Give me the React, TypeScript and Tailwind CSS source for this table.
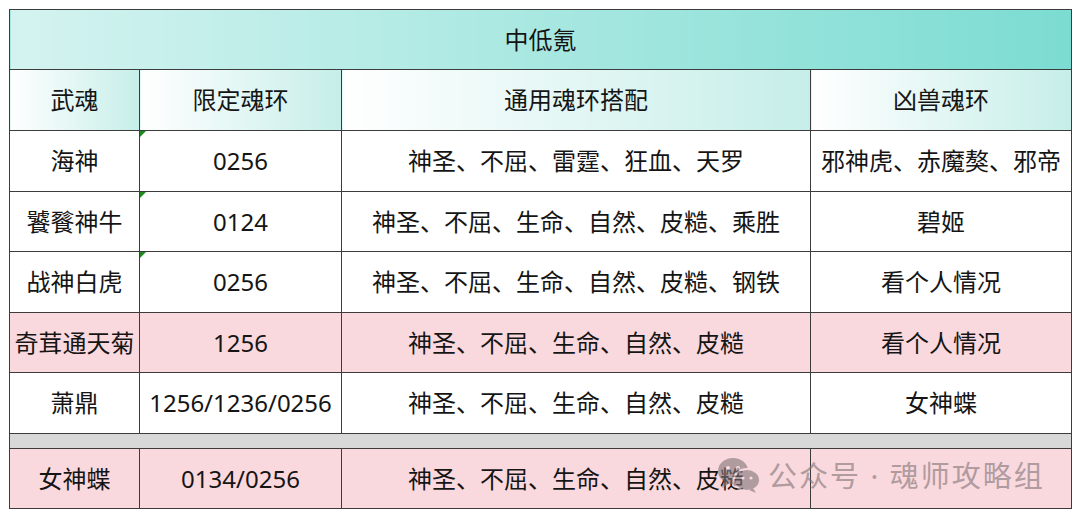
import React from "react";

const rows: { a: string; b: string; c: string; d: string; pink?: boolean; tri?: boolean; h: string }[] = [
  { a: "海神", b: "0256", c: "神圣、不屈、雷霆、狂血、天罗", d: "邪神虎、赤魔獒、邪帝", tri: true, h: "h-[61px]" },
  { a: "饕餮神牛", b: "0124", c: "神圣、不屈、生命、自然、皮糙、乘胜", d: "碧姬", tri: true, h: "h-[60px]" },
  { a: "战神白虎", b: "0256", c: "神圣、不屈、生命、自然、皮糙、钢铁", d: "看个人情况", tri: true, h: "h-[61px]" },
  { a: "奇茸通天菊", b: "1256", c: "神圣、不屈、生命、自然、皮糙", d: "看个人情况", pink: true, h: "h-[60px]" },
  { a: "萧鼎", b: "1256/1236/0256", c: "神圣、不屈、生命、自然、皮糙", d: "女神蝶", h: "h-[61px]" },
];

function Tri() {
  return (
    <span className="absolute left-0 top-0 w-0 h-0 border-t-[6px] border-t-[#1e8a1e] border-r-[6px] border-r-transparent" />
  );
}

function WeChat() {
  return (
    <svg width="46" height="38" viewBox="0 0 46 38">
      <ellipse cx="17" cy="15" rx="15" ry="13" fill="#7f7376" />
      <path d="M8 25 L6 32 L14 27 Z" fill="#7f7376" />
      <ellipse cx="31" cy="24" rx="13" ry="11" fill="#7f7376" stroke="#f9dadf" strokeWidth="2" />
      <path d="M37 32 L40 37 L33 34 Z" fill="#7f7376" />
      <circle cx="12" cy="12" r="2" fill="#f9dadf" />
      <circle cx="22" cy="12" r="2" fill="#f9dadf" />
      <circle cx="27" cy="22" r="1.6" fill="#f9dadf" />
      <circle cx="35" cy="22" r="1.6" fill="#f9dadf" />
    </svg>
  );
}

export default function App() {
  const cell = "border border-[#3c3c3c] text-center align-middle p-0";
  const hdr = "bg-[linear-gradient(to_right,#ffffff,#c6eee9)]";
  return (
    <div
      className="w-[1080px] h-[518px] bg-white relative text-[#151515] text-[24px] leading-none"
      style={{ fontFamily: '"Noto Sans", "Noto Sans CJK SC", sans-serif' }}
    >
      <div className="pt-[9px] pl-[9px]">
        <table className="border-collapse table-fixed w-[1062px]">
          <colgroup>
            <col className="w-[130px]" />
            <col className="w-[202px]" />
            <col className="w-[469px]" />
            <col className="w-[261px]" />
          </colgroup>
          <tbody>
            <tr className="h-[60px]">
              <td colSpan={4} className={`${cell} bg-[linear-gradient(to_right,#d4f3f0,#7cdcd2)]`}>
                中低氪
              </td>
            </tr>
            <tr className="h-[61px]">
              <td className={`${cell} ${hdr}`}>武魂</td>
              <td className={`${cell} ${hdr}`}>限定魂环</td>
              <td className={`${cell} ${hdr}`}>通用魂环搭配</td>
              <td className={`${cell} ${hdr}`}>凶兽魂环</td>
            </tr>
            {rows.map((r, i) => (
              <tr key={i} className={`${r.h} ${r.pink ? "bg-[#fad9de]" : "bg-white"}`}>
                <td className={`${cell} whitespace-nowrap`}>{r.a}</td>
                <td className={`${cell} relative whitespace-nowrap`}>
                  {r.tri && <Tri />}
                  {r.b}
                </td>
                <td className={`${cell} whitespace-nowrap`}>{r.c}</td>
                <td className={`${cell} whitespace-nowrap`}>{r.d}</td>
              </tr>
            ))}
            <tr className="h-[15px] bg-[#d8d8d8]">
              <td colSpan={4} className={cell}></td>
            </tr>
            <tr className="h-[60px] bg-[#fad9de]">
              <td className={cell}>女神蝶</td>
              <td className={cell}>0134/0256</td>
              <td className={cell}>神圣、不屈、生命、自然、皮糙</td>
              <td className={cell}></td>
            </tr>
          </tbody>
        </table>
      </div>
      <div className="absolute left-[716px] top-[456px] flex items-center gap-[6px] text-[29px] text-[#7f7376] opacity-60">
        <WeChat />
        <span className="tracking-[2px]">公众号 · 魂师攻略组</span>
      </div>
    </div>
  );
}
